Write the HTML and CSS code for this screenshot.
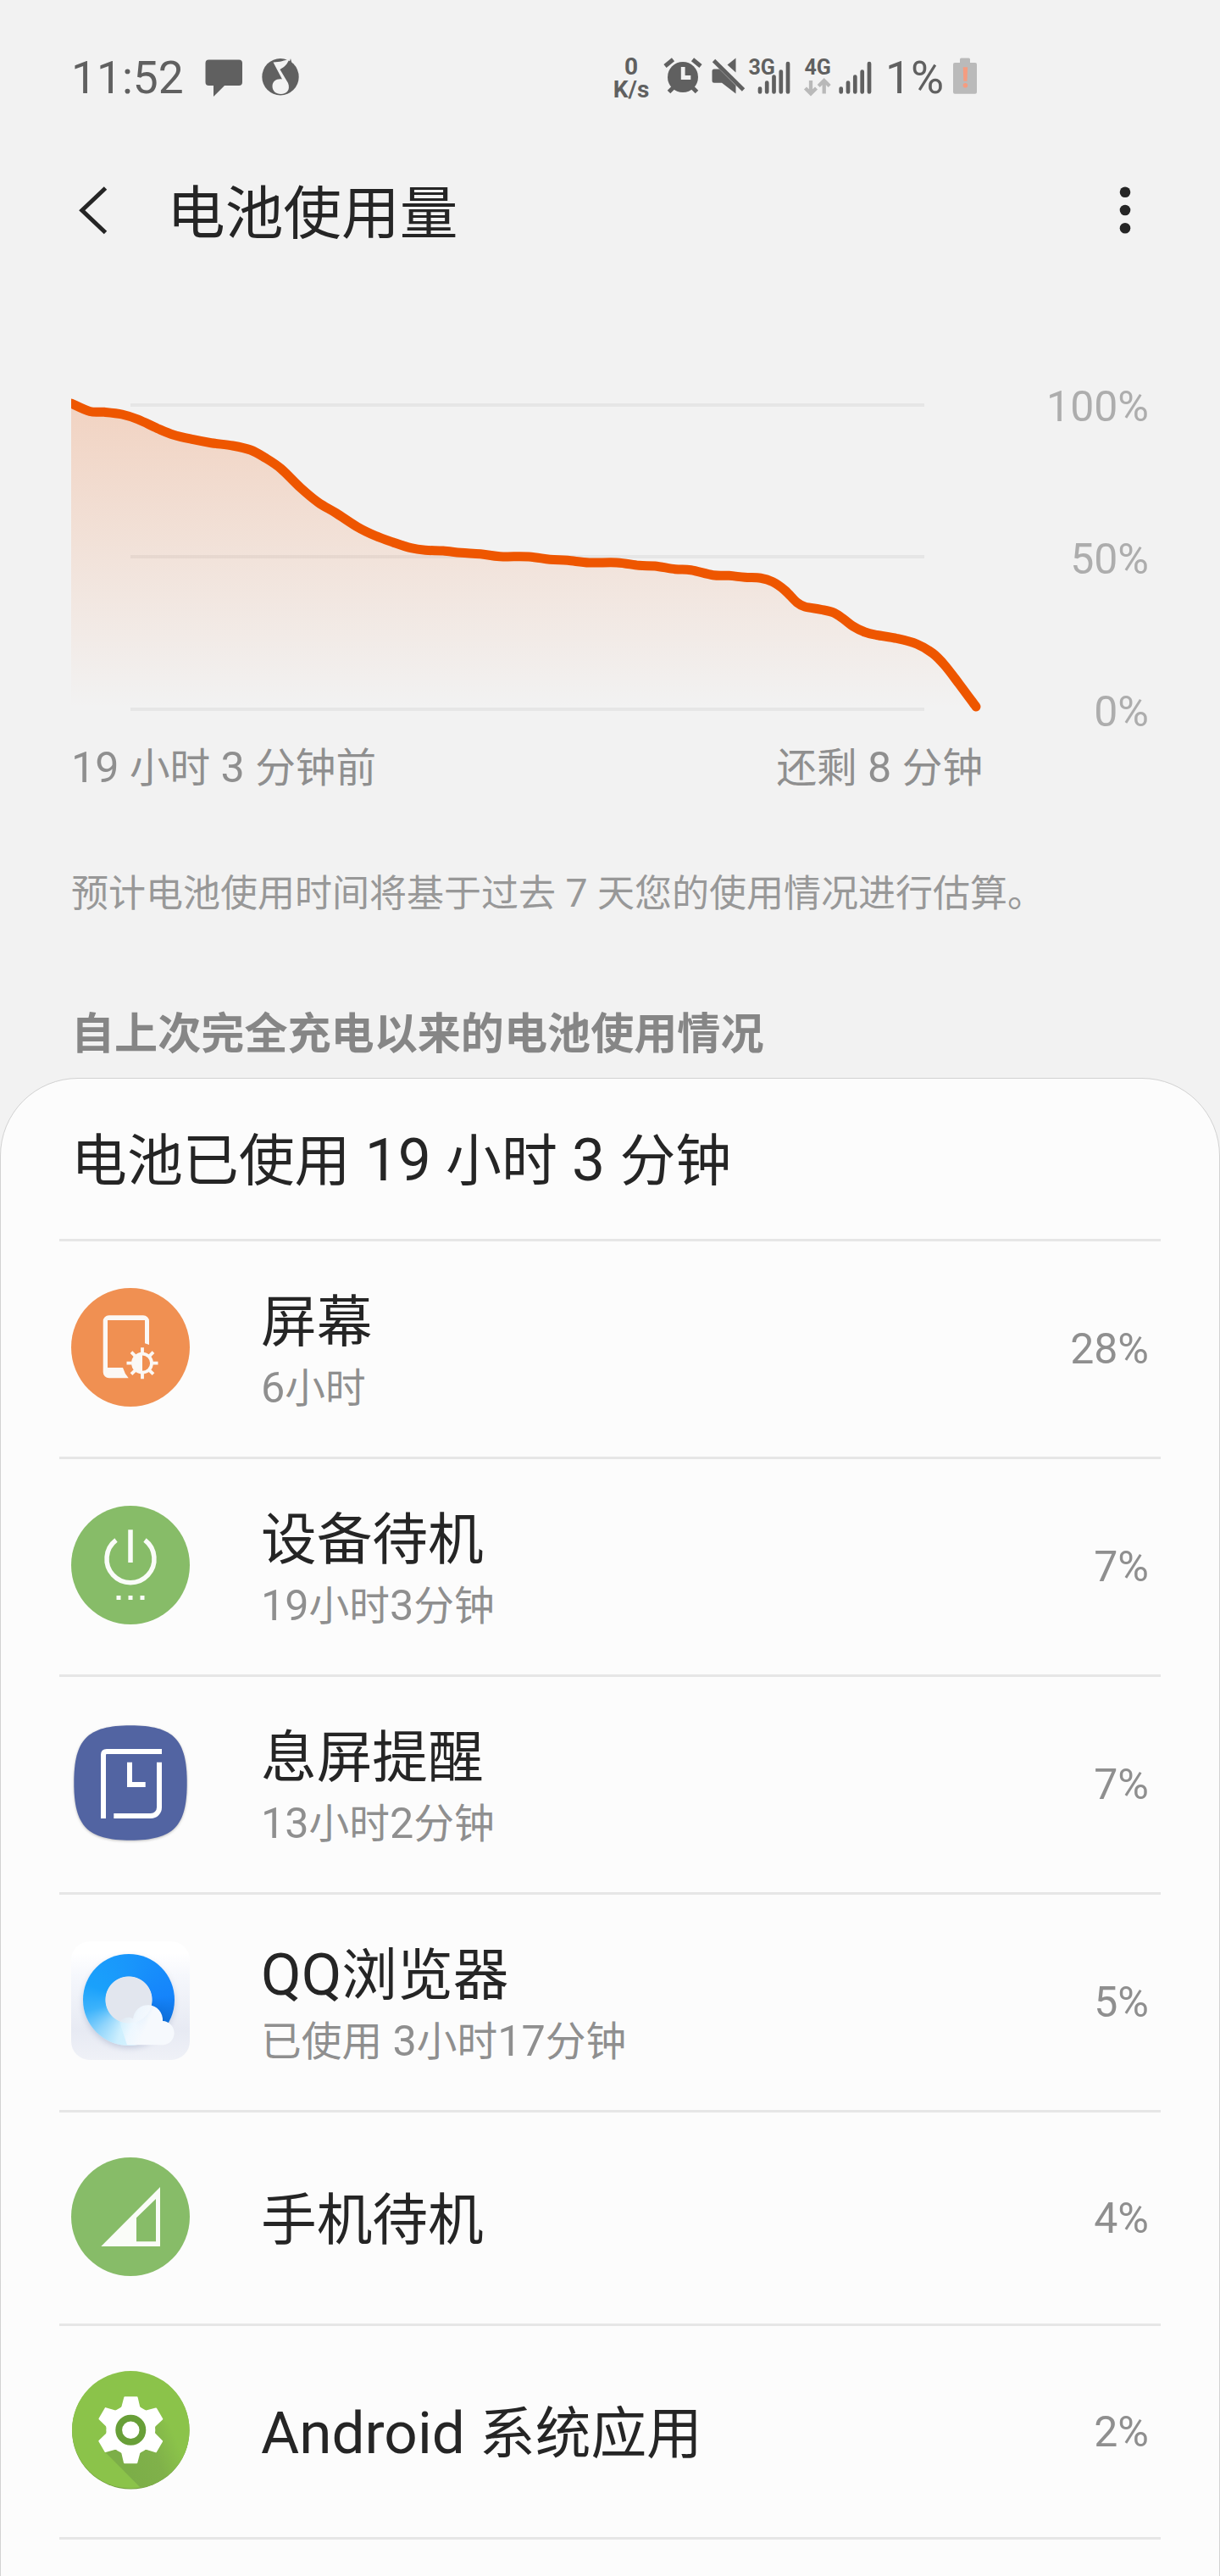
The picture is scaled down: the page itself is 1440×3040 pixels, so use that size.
FILE: index.html
```
<!DOCTYPE html>
<html lang="zh-CN">
<head>
<meta charset="utf-8">
<title>电池使用量</title>
<link rel="stylesheet" href="styles.css">
</head>
<body>
<div class="status">
  <span class="clock">11:52</span>
  <svg class="s-msg" viewBox="238 60 52 60"><path d="M246.500 70.500H282a4 4 0 0 1 4 4V97a4 4 0 0 1-4 4H265L252 114V101H246.500a4 4 0 0 1-4-4V74.500a4 4 0 0 1 4-4z" fill="#606060"/></svg>
  <svg class="s-music" viewBox="305 60 52 60"><circle cx="331" cy="90.700" r="21.700" fill="#606060"/><path d="M322.500 73.500c8-.5 13-1.500 19-4.500-2 7-6 10-11 13l9.500 16c3 8-1.500 13-8.500 13-6 0-10-4-10-9 0-6 5-9.500 11.500-8.500z" fill="#f2f2f2"/><path d="M330.500 82.500c7-2.500 11-7 12.500-13.500l2 8-4 10z" fill="#606060"/></svg>
  <span class="grow"></span>
  <span class="speed"><span>0</span><span>K/s</span></span>
  <svg class="s-alarm" viewBox="780 60 52 60"><g stroke="#606060" stroke-width="5"><path d="M785 78l9.500-7.800M827 78l-9.500-7.800M789.500 108.500l6-6M822.500 108.500l-6-6"/></g><circle cx="806" cy="91" r="18" fill="#606060"/><path d="M806.200 79v12.500H815.300" stroke="#f2f2f2" stroke-width="4.800" fill="none"/></svg>
  <svg class="s-mute" viewBox="836 60 46 60"><path d="M868.500 68.500V85.500L858.500 76.500zM843 81.500H849L868.500 101V110.500L852 97.800H843a2.500 2.500 0 0 1-2.500-2.500V84a2.500 2.500 0 0 1 2.500-2.500z" fill="#606060"/><path d="M842.500 71.500L877.500 106" stroke="#606060" stroke-width="4.800"/></svg>
  <svg class="s-3g" viewBox="882 60 60 60"><text class="net" x="883.500" y="87.700">3G</text><path class="bars" d="M897 108.500v-4M905.200 108.500v-11M913.500 108.500v-18M921.800 108.500v-24M930 108.500v-33.500"/></svg>
  <svg class="s-4g" viewBox="942 60 96 60"><text class="net" x="949.500" y="87.700">4G</text><path d="M957 95v15M950.500 104l6.500 6.500 6.500-6.500M972.700 110.500v-15M966.200 101.500l6.500-6.500 6.500 6.500" stroke="#b9b9b9" stroke-width="4.300" fill="none"/><path class="bars" d="M992.700 108.500v-4M1001 108.500v-11M1009.300 108.500v-18M1017.700 108.500v-24M1026 108.500v-33.500"/></svg>
  <span class="level">1%</span>
  <svg class="s-batt" viewBox="1120 60 40 60"><path d="M1133 74v-4a1.500 1.500 0 0 1 1.500-1.500h9a1.500 1.500 0 0 1 1.500 1.500v4h6a2 2 0 0 1 2 2v32.700a2 2 0 0 1-2 2h-24a2 2 0 0 1-2-2V76a2 2 0 0 1 2-2z" fill="#bababa"/><path d="M1136.700 79.300h5.400l-.6 16.400h-4.200z" fill="#f59c80"/><circle cx="1139.400" cy="100.800" r="2.800" fill="#f59c80"/></svg>
</div>

<header class="appbar">
  <svg class="back" viewBox="84 213 50 80"><path d="M124.500 222L96.800 248.300L124.500 274.500" fill="none" stroke="#252525" stroke-width="5"/></svg>
  <h1>电池使用量</h1>
  <svg class="more" viewBox="1308 213 40 80"><g fill="#252525"><circle cx="1328" cy="226.700" r="6.300"/><circle cx="1328" cy="248" r="6.300"/><circle cx="1328" cy="269.300" r="6.300"/></g></svg>
</header>

<section class="usage">
  <div class="chart-row">
    <svg class="chart" viewBox="84 460 1086 396">
      <defs>
        <linearGradient id="fade" gradientUnits="userSpaceOnUse" x1="0" y1="476" x2="0" y2="836"><stop offset="0" stop-color="#ee5600" stop-opacity=".2"/><stop offset="1" stop-color="#ee5600" stop-opacity="0"/></linearGradient>
      </defs>
      <path d="M154 478H1091M154 657H1091M154 837H1091" stroke="#e6e6e6" stroke-width="4"/>
      <path id="area" fill="url(#fade)"/>
      <path id="line" fill="none" stroke="#ee5600" stroke-width="11" stroke-linecap="round"/>
    </svg>
    <div class="scale"><span>100%</span><span>50%</span><span>0%</span></div>
  </div>
  <div class="times"><span><span class="n">19 </span>小时<span class="n"> 3 </span>分钟前</span><span>还剩<span class="n"> 8 </span>分钟</span></div>
</section>

<p class="note">预计电池使用时间将基于过去<span class="n"> 7 </span>天您的使用情况进行估算。</p>
<h2>自上次完全充电以来的电池使用情况</h2>

<main class="sheet">
  <div class="total">电池已使用<span class="n"> 19 </span>小时<span class="n"> 3 </span>分钟</div>

  <div class="row">
    <svg class="icon" viewBox="0 0 140 140"><circle cx="70" cy="70" r="70" fill="#f09052"/><path d="M92 67L87 65.300V38H43V94H61Q63 101 67.700 106.300H44.700a7 7 0 0 1-7-7V39.300a7 7 0 0 1 7-7H85a7 7 0 0 1 7 7z" fill="#fbf8f5"/><g stroke="#fbf8f5" stroke-width="3.800" fill="none"><circle cx="84" cy="88.700" r="11"/><path d="M84 76.500v-6.300M84 101v6.300M71.800 88.700h-6.300M96.200 88.700h6.300M75.400 80.100l-4.400-4.400M92.600 80.100l4.400-4.400M75.400 97.300l-4.400 4.400M92.600 97.300l4.400 4.400"/></g><path d="M84 77.700a11 11 0 0 0 0 22z" fill="#fbf8f5"/></svg>
    <div class="label"><b>屏幕</b><i><span class="n">6</span>小时</i></div><span class="pct">28%</span>
  </div>

  <div class="row">
    <svg class="icon" viewBox="0 0 140 140"><circle cx="70" cy="70" r="70" fill="#87bc68"/><path d="M53 40.500a28 28 0 1 0 34 0M70 28.300V67" fill="none" stroke="#fafcf8" stroke-width="5.500"/><path d="M53.500 106h5v5h-5zM67.500 106h5v5h-5zM81.500 106h5v5h-5z" fill="#fafcf8"/></svg>
    <div class="label"><b>设备待机</b><i><span class="n">19</span>小时<span class="n">3</span>分钟</i></div><span class="pct">7%</span>
  </div>

  <div class="row">
    <svg class="icon soft" viewBox="0 0 140 140"><path d="M70 2.300C121 2.300 136.700 19 136.700 70C136.700 121 121 137.700 70 137.700C19 137.700 3.300 121 3.300 70C3.300 19 19 2.300 70 2.300z" fill="#5264a2"/><path d="M38 112V37q0-4 4-4H107M104 45.700V99a10 10 0 0 1-10 10H50.300M69 45.700V72H87.700" fill="none" stroke="#fff" stroke-width="6"/></svg>
    <div class="label"><b>息屏提醒</b><i><span class="n">13</span>小时<span class="n">2</span>分钟</i></div><span class="pct">7%</span>
  </div>

  <div class="row">
    <div class="icon browser">
      <div class="ring"></div>
      <svg class="cloud" viewBox="0 0 140 140">
        <defs><linearGradient id="mist" gradientUnits="userSpaceOnUse" x1="56" y1="100" x2="84" y2="112"><stop offset="0" stop-color="#e2f5ff" stop-opacity=".25"/><stop offset=".5" stop-color="#f0f8ff" stop-opacity=".9"/><stop offset="1" stop-color="#f6f9fd"/></linearGradient></defs>
        <path d="M57 95C62 89 70 88.500 73 91.500A17.500 17.500 0 0 1 108 94A14.200 14.200 0 0 1 109 122.300H66z" fill="url(#mist)"/>
      </svg>
    </div>
    <div class="label"><b><span class="n">QQ</span>浏览器</b><i>已使用<span class="n"> 3</span>小时<span class="n">17</span>分钟</i></div><span class="pct">5%</span>
  </div>

  <div class="row single">
    <svg class="icon" viewBox="0 0 140 140"><circle cx="70" cy="70" r="70" fill="#87bc68"/><path d="M105 35V105H35.300zM77 71.300V99.300H100V49z" fill="#fafcf8" fill-rule="evenodd"/></svg>
    <div class="label"><b>手机待机</b></div><span class="pct">4%</span>
  </div>

  <div class="row single">
    <svg class="icon" viewBox="0 0 140 140">
      <defs>
        <clipPath id="disc"><circle cx="70.300" cy="69.700" r="69.300"/></clipPath>
        <linearGradient id="cast" gradientUnits="userSpaceOnUse" x1="62" y1="100" x2="122" y2="76"><stop offset="0" stop-color="#7cae48"/><stop offset=".55" stop-color="#80b14a"/><stop offset="1" stop-color="#8bc34a"/></linearGradient>
      </defs>
      <circle cx="70.300" cy="70.200" r="69.300" fill="#6f9c3d"/><circle cx="70.300" cy="69.400" r="69.300" fill="#8bc34a"/>
      <path d="M40.300 96L90 146L146 92L107.700 57z" fill="url(#cast)" clip-path="url(#disc)"/>
      <g transform="translate(70.300 69.700)" fill="#fff" stroke="#fff" stroke-width="2" stroke-linejoin="round">
        <circle r="28"/>
        <path id="tooth" d="M-7 -38.500H7.300L10 -27L14 -22H-14L-10 -27z"/>
        <use href="#tooth" transform="rotate(60)"/><use href="#tooth" transform="rotate(120)"/><use href="#tooth" transform="rotate(180)"/><use href="#tooth" transform="rotate(240)"/><use href="#tooth" transform="rotate(300)"/>
      </g>
      <circle cx="70.300" cy="69.700" r="14.100" fill="#fff" stroke="#689f38" stroke-width="7.800"/>
    </svg>
    <div class="label"><b><span class="n">Android </span>系统应用</b></div><span class="pct">2%</span>
  </div>
</main>
<script src="chart.js"></script>
</body>
</html>
```
FILE: styles.css
```
* { box-sizing: border-box; }
body {
  margin: 0;
  width: 1440px;
  height: 3040px;
  overflow: hidden;
  display: flex;
  flex-direction: column;
  background: #f2f2f2;
  color: #252525;
  font-family: Roboto, "Noto Sans CJK SC", sans-serif;
}
svg { display: block; flex: none; }

/* Latin letters and digits run slightly larger than the Chinese glyphs. */
.n { font-size: 1.055em; line-height: 1; white-space: pre; }

.status { display: flex; height: 120px; padding: 60px 280px 0 84px; color: #606060; flex: none; }
.clock, .level { font-size: 53.300px; line-height: 64px; white-space: nowrap; }
.clock { width: 154px; }
.s-msg, .s-music, .s-alarm { width: 52px; height: 60px; }
.s-music { margin-left: 15px; }
.grow { flex: 1; }
.speed { display: flex; flex-direction: column; width: 46px; margin: 5px 12px 0 0; text-align: center; font-size: 28px; font-weight: 700; line-height: 27px; }
.s-mute { width: 46px; height: 60px; margin-left: 4px; }
.s-3g { width: 60px; height: 60px; }
.s-4g { width: 96px; height: 60px; }
.s-batt { width: 40px; height: 60px; }
.level { width: 82px; padding-left: 7px; }
.net { font-size: 25px; font-weight: 700; fill: #606060; }
.bars { stroke: #606060; stroke-width: 4.700px; stroke-linecap: round; }

.appbar { display: flex; height: 266px; align-items: center; padding: 0 92px 0 84px; flex: none; }
.back { width: 50px; height: 80px; }
h1 { flex: 1; margin: 0 0 0 63px; font-size: 68.700px; font-weight: 400; line-height: 80px; }
.more { width: 40px; height: 80px; }

.usage { padding: 74px 84px 0; color: #8f8f8f; flex: none; }
.chart-row { display: flex; height: 396px; justify-content: space-between; }
.chart { width: 1086px; height: 396px; }
.scale { display: flex; flex-direction: column; gap: 120px; margin-top: -10px; text-align: right; font-size: 50px; line-height: 60px; color: #adadad; }
.times { display: flex; width: 1076px; height: 60px; justify-content: space-between; margin-top: 21px; font-size: 47.600px; line-height: 60px; }

.note { margin: 84px 84px 0; height: 68px; font-size: 44px; line-height: 68px; color: #989898; flex: none; }
h2 { margin: 94px 84px 0; height: 76px; font-size: 51.100px; line-height: 76px; font-weight: 700; color: #868686; flex: none; }

.sheet { flex: none; height: 1800px; margin-top: 13px; border: 1px solid #d2d2d2; border-radius: 92px 92px 0 0; background: #fcfcfc; padding: 0 69px; }
.total { height: 192px; padding: 54px 14px 0; font-size: 65.900px; line-height: 88px; border-bottom: 3px solid #e6e6e6; }
.row { display: flex; height: 257px; padding: 0 14px; border-bottom: 3px solid #e6e6e6; }
.row.single { height: 252px; }
.icon { width: 140px; height: 140px; margin-top: 55px; flex: none; }
.single .icon { margin-top: 53px; }
.soft { filter: drop-shadow(0 1px 1.500px rgba(0, 0, 0, .25)); }
.label { flex: 1; margin-left: 84px; padding-top: 52px; display: flex; flex-direction: column; }
.label b { font-size: 65.700px; font-weight: 400; line-height: 88px; }
.label i { font-size: 47.700px; font-style: normal; line-height: 68px; color: #8f8f8f; }
.single .label { padding-top: 84px; }
.pct { align-self: center; font-size: 50px; line-height: 60px; color: #8f8f8f; }

.browser { position: relative; border-radius: 22px; background: linear-gradient(#fff 10%, #f5f7fc 30%, #e7eaf3 75%, #eff1f7); overflow: hidden; }
.ring {
  position: absolute; left: 14px; top: 15px; width: 107.500px; height: 107.500px; border-radius: 50%;
  background:
    radial-gradient(circle, #e2e6ee 0 27.200px, transparent 28px),
    conic-gradient(#1996fb, #1584fb 85deg, #0b68cf 130deg, #d9f3ff 165deg, #cdeffe 195deg, #8fd4fb 225deg, #3db3fb 255deg, #1aa1fb 290deg, #1996fb);
  box-shadow: 0 3px 6px rgba(90, 110, 160, .25);
}
.cloud { position: absolute; left: 0; top: 0; width: 140px; height: 140px; }
```
FILE: chart.js
```
// Battery level samples, x and y in chart units.
const samples = [
  [84, 476], [106, 485.5], [123, 486.3], [144, 489], [163, 495], [186, 505.7], [205, 513.3], [228, 518.7],
  [249.400, 522.7], [274.600, 526], [295.700, 531], [312.500, 540], [331.500, 553], [354.600, 575.5], [375.700, 593], [396.700, 605.5],
  [422, 622], [443, 632.3], [464, 640], [485, 646.7], [502, 649.3], [523, 650], [544, 652.3], [567, 653.7],
  [590, 656.7], [624, 657], [649, 660.3], [670, 661.3], [695.500, 664], [728, 664], [754, 667.3], [773, 668],
  [797, 671.7], [815.600, 672.7], [841.600, 678.7], [860.500, 679.3], [879, 681.3], [898, 682.3], [912, 686.7], [926.500, 696.7],
  [940.700, 711], [950, 716], [969, 719.3], [983, 722.7], [995, 730], [1006.800, 739], [1021, 746], [1035, 749.5],
  [1058.700, 753.5], [1082, 760], [1101, 771], [1115, 785], [1131.800, 806.7], [1152, 834]
];

// Catmull-Rom spline through the samples.
let d = `M${samples[0]}`;
for (let i = 0; i < samples.length - 1; i++) {
  const a = samples[Math.max(i - 1, 0)], b = samples[i], c = samples[i + 1], e = samples[Math.min(i + 2, samples.length - 1)];
  d += `C${b[0] + (c[0] - a[0]) / 6} ${b[1] + (c[1] - a[1]) / 6} ${c[0] - (e[0] - b[0]) / 6} ${c[1] - (e[1] - b[1]) / 6} ${c[0]} ${c[1]}`;
}
document.getElementById('line').setAttribute('d', d);
document.getElementById('area').setAttribute('d', `${d}V836H84Z`);
```
